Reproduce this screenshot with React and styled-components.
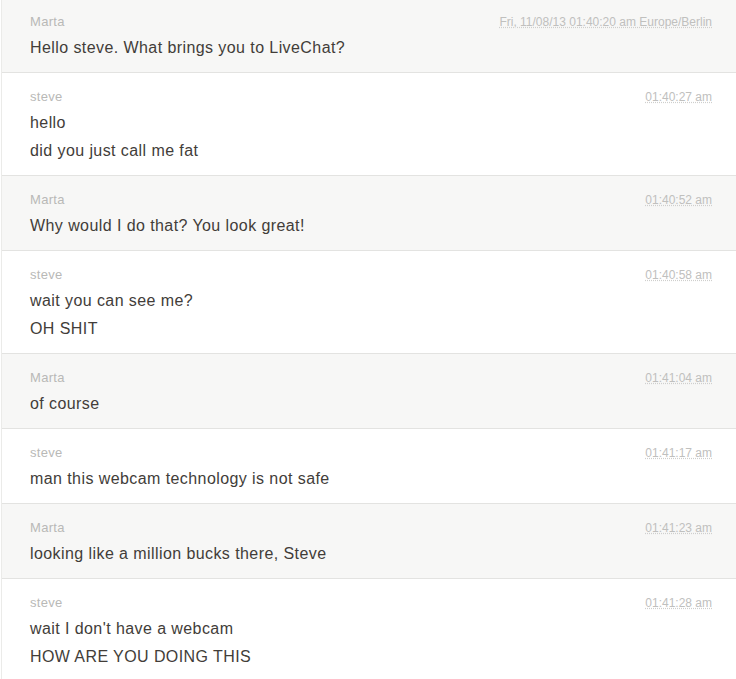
import React from "react";
import styled, { createGlobalStyle } from "styled-components";

const messages = [
  {
    from: "Marta",
    agent: true,
    time: "Fri, 11/08/13 01:40:20 am Europe/Berlin",
    lines: ["Hello steve. What brings you to LiveChat?"],
  },
  {
    from: "steve",
    time: "01:40:27 am",
    lines: ["hello", "did you just call me fat"],
  },
  {
    from: "Marta",
    agent: true,
    time: "01:40:52 am",
    lines: ["Why would I do that? You look great!"],
  },
  {
    from: "steve",
    time: "01:40:58 am",
    lines: ["wait you can see me?", "OH SHIT"],
  },
  { from: "Marta", agent: true, time: "01:41:04 am", lines: ["of course"] },
  {
    from: "steve",
    time: "01:41:17 am",
    lines: ["man this webcam technology is not safe"],
  },
  {
    from: "Marta",
    agent: true,
    time: "01:41:23 am",
    lines: ["looking like a million bucks there, Steve"],
  },
  {
    from: "steve",
    time: "01:41:28 am",
    lines: ["wait I don't have a webcam", "HOW ARE YOU DOING THIS"],
  },
];

const Global = createGlobalStyle`
  html, body {
    margin: 0;
    padding: 0;
    background: #fff;
    overflow: hidden;
  }
  body {
    font-family: "Liberation Sans", Arial, Helvetica, sans-serif;
  }
`;

const Transcript = () => (
  <>
    <Global />
    <ChatLog>
      {messages.map((m, i) => (
        <Message key={i} agent={m.agent}>
          <Header>
            <Author>{m.from}</Author>
            <Time title={m.time}>{m.time}</Time>
          </Header>
          {m.lines.map((line, j) => (
            <Line key={j}>{line}</Line>
          ))}
        </Message>
      ))}
    </ChatLog>
  </>
);

export default Transcript;

// list is scrolled a few px, first row is cut at the top
const ChatLog = styled.div`
  margin: -2px 0 0 1px;
  border-left: 1px solid #ebebe9;
`;

const Message = styled.div`
  padding: 16px 24px 11px 28px;
  background: ${(p) => (p.agent ? "#f7f7f6" : "#ffffff")};
  border-bottom: 1px solid #e3e3e1;
`;

const Header = styled.div`
  display: flex;
  justify-content: space-between;
  align-items: baseline;
  height: 16px;
  margin-bottom: 5px;
`;

const Author = styled.span`
  font-size: 13px;
  line-height: 16px;
  letter-spacing: 0.3px;
  color: #b9b9b7;
`;

const Time = styled.abbr`
  font-size: 12px;
  line-height: 16px;
  color: #c0c0be;
  text-decoration: underline dotted #cfcfcd;
  text-underline-offset: 1px;
`;

const Line = styled.div`
  font-size: 16px;
  line-height: 26px;
  letter-spacing: 0.42px;
  color: #423d39;

  & + & {
    margin-top: 2px;
  }
`;
